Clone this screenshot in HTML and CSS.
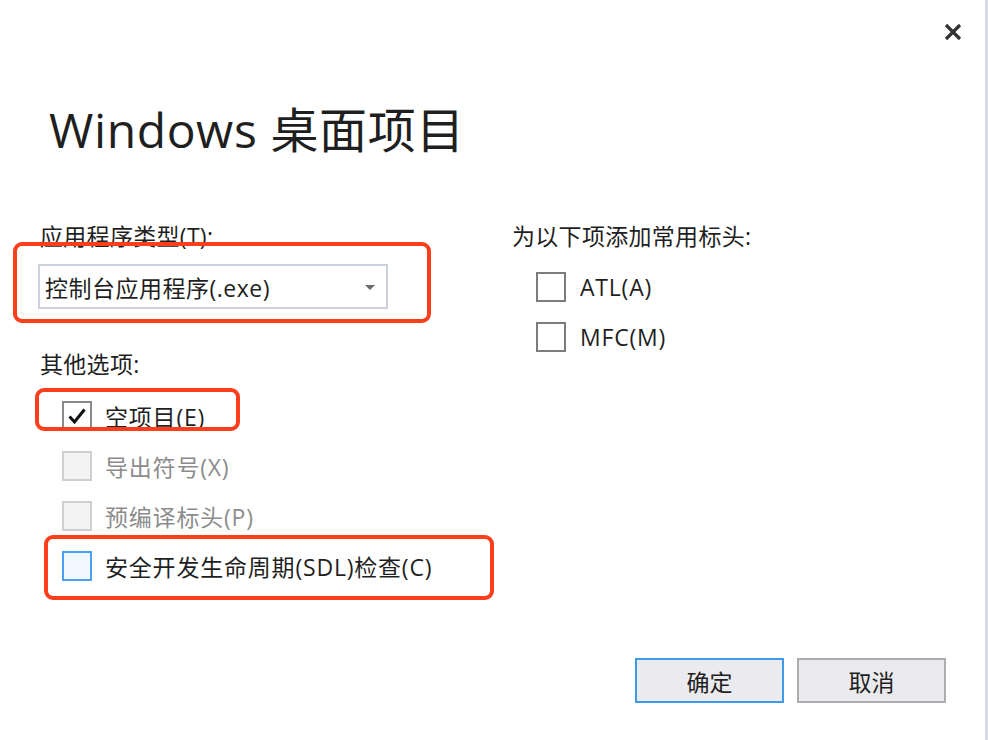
FILE: index.html
```html
<!DOCTYPE html>
<html lang="zh-CN">
<head>
<meta charset="utf-8">
<title>Windows 桌面项目</title>
<link rel="stylesheet" href="styles.css">
</head>
<body>
<div class="dialog">
  <div class="header">
    <button class="close" aria-label="关闭">
      <svg width="20" height="18" viewBox="0 0 20 18"><path d="M3 2 L17 16 M17 2 L3 16" stroke="#333" stroke-width="3.2" fill="none"/></svg>
    </button>
  </div>
  <h1 class="title">Windows 桌面项目</h1>
  <div class="columns">
    <div class="col-left">
      <div class="label">应用程序类型(T):</div>
      <div class="combo">
        <span class="combo-text">控制台应用程序(.exe)</span>
        <span class="arrow"></span>
      </div>
      <div class="label label-options">其他选项:</div>
      <div class="checks">
        <div class="check-row">
          <span class="box checked">
            <svg width="20" height="18" viewBox="0 0 20 18"><path d="M2.5 9.5 L7.5 15 L17.5 2.5" stroke="#111" stroke-width="3" fill="none"/></svg>
          </span>
          <span class="check-label">空项目(E)</span>
        </div>
        <div class="check-row disabled">
          <span class="box"></span>
          <span class="check-label">导出符号(X)</span>
        </div>
        <div class="check-row disabled">
          <span class="box"></span>
          <span class="check-label">预编译标头(P)</span>
        </div>
        <div class="check-row focus">
          <span class="box"></span>
          <span class="check-label">安全开发生命周期(SDL)检查(C)</span>
        </div>
      </div>
    </div>
    <div class="col-right">
      <div class="label">为以下项添加常用标头:</div>
      <div class="checks checks-right">
        <div class="check-row">
          <span class="box"></span>
          <span class="check-label">ATL(A)</span>
        </div>
        <div class="check-row">
          <span class="box"></span>
          <span class="check-label">MFC(M)</span>
        </div>
      </div>
    </div>
  </div>
  <div class="footer">
    <button class="btn btn-primary">确定</button>
    <button class="btn">取消</button>
  </div>

  <div class="mark mark-type"></div>
  <div class="mark mark-empty"></div>
  <div class="mark mark-sdl"></div>
</div>
</body>
</html>
```
FILE: styles.css
```css
html, body {
  margin: 0;
  padding: 0;
  background: #ffffff;
}

body {
  font-family: "Open Sans", "Noto Sans CJK SC", sans-serif;
  color: #1f1f1f;
}

.dialog {
  position: relative;
  width: 988px;
  height: 740px;
  box-sizing: border-box;
  border-right: 3px solid #d6d9e3;
  display: flex;
  flex-direction: column;
  overflow: hidden;
}

.header {
  height: 102px;
  display: flex;
  justify-content: flex-end;
  align-items: flex-start;
  padding: 23px 22px 0 0;
  box-sizing: border-box;
}

.close {
  border: 0;
  background: transparent;
  padding: 0;
  width: 20px;
  height: 18px;
  display: block;
}

.close svg {
  display: block;
}

.title {
  margin: 0;
  padding-left: 49px;
  height: 56px;
  font-size: 48px;
  line-height: 56px;
  font-weight: 400;
  letter-spacing: 0.6px;
  color: #1f1f1f;
}

.columns {
  display: flex;
  margin-top: 63px;
}

.col-left {
  width: 512px;
  padding-left: 40px;
  box-sizing: border-box;
}

.col-right {
  flex: 1;
}

.label {
  font-size: 23px;
  line-height: 30px;
  height: 30px;
  white-space: nowrap;
  letter-spacing: 0.3px;
}

.combo {
  margin-top: 13px;
  margin-left: -2px;
  width: 350px;
  height: 45px;
  box-sizing: border-box;
  border: 2px solid #cdd1dc;
  display: flex;
  align-items: center;
  justify-content: space-between;
  padding: 0 11px 0 5px;
  font-size: 23px;
  letter-spacing: 0.5px;
}

.arrow {
  width: 0;
  height: 0;
  border-left: 5px solid transparent;
  border-right: 5px solid transparent;
  border-top: 5px solid #6a6a6a;
  margin-top: 2px;
}

.label-options {
  margin-top: 40px;
}

.checks {
  margin-top: 22px;
  padding-left: 22px;
  display: flex;
  flex-direction: column;
  gap: 20px;
}

.checks-right {
  margin-top: 21px;
  padding-left: 24px;
}

.check-row {
  display: flex;
  align-items: center;
  height: 30px;
  gap: 13px;
  font-size: 23px;
  white-space: nowrap;
  letter-spacing: 0.8px;
}

.checks-right .check-row {
  gap: 14px;
}

.box {
  width: 30px;
  height: 30px;
  box-sizing: border-box;
  border: 2px solid #7d7d7d;
  background: #ffffff;
  display: flex;
  align-items: center;
  justify-content: center;
  flex-shrink: 0;
}

.box.checked {
  border-color: #8a8a8a;
}

.box svg {
  display: block;
}

.disabled .box {
  border-color: #cfcfcf;
  background: #f3f3f3;
}

.disabled .check-label {
  color: #8c8c8c;
}

.focus .box {
  border-color: #4aa0f2;
  background: #f1f7ff;
}

.footer {
  margin-top: auto;
  display: flex;
  justify-content: flex-end;
  gap: 13px;
  padding: 0 39px 37px 0;
}

.btn {
  width: 149px;
  height: 45px;
  box-sizing: border-box;
  border: 2px solid #adadad;
  background: #ebebef;
  font-family: "Open Sans", "Noto Sans CJK SC", sans-serif;
  font-size: 23px;
  color: #1f1f1f;
  padding: 0;
}

.btn-primary {
  border-color: #3d9bea;
}

.mark {
  position: absolute;
  border: 4px solid #fb3f1d;
  border-radius: 9px;
  box-sizing: border-box;
  pointer-events: none;
}

.mark-type {
  left: 13px;
  top: 242px;
  width: 418px;
  height: 81px;
}

.mark-empty {
  left: 35px;
  top: 388px;
  width: 205px;
  height: 43px;
}

.mark-sdl {
  left: 44px;
  top: 535px;
  width: 450px;
  height: 65px;
}
```
